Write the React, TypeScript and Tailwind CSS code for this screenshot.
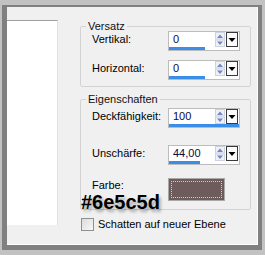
import React from "react";

function Spin() {
  return (
    <svg width="10" height="15" viewBox="0 0 10 15" className="block shrink-0">
      <rect x="0.5" y="0.5" width="9" height="6.5" fill="#eef1f6" stroke="#cdd3de" />
      <rect x="0.5" y="8" width="9" height="6.5" fill="#eef1f6" stroke="#cdd3de" />
      <path d="M2 6 L5 2.5 L8 6Z" fill="#7585c8" />
      <path d="M2 9.5 L5 13 L8 9.5Z" fill="#7585c8" />
    </svg>
  );
}

function Drop() {
  return (
    <svg width="12" height="15" viewBox="0 0 12 15" className="block shrink-0 ml-[1px] mr-[1px]">
      <rect x="0.5" y="0.5" width="11" height="14" fill="#fbfbfb" stroke="#3a3a3a" />
      <path d="M2.5 6 H9.5 L6 10Z" fill="#000" />
    </svg>
  );
}

function Control({ value, bar }: { value: string; bar: number }) {
  return (
    <div className="w-[72px] h-[20px] border border-[#bcbcbc] bg-white flex flex-col">
      <div className="flex h-[15px]">
        <div className="flex-1 pl-[4px] text-[11px] leading-[15px] text-[#0a0a3a]">{value}</div>
        <Spin />
        <Drop />
      </div>
      <div className="h-[3px]">
        <div className="h-full bg-[#3b8ee8]" style={{ width: bar }} />
      </div>
    </div>
  );
}

function Row({ label, value, bar }: { label: string; value: string; bar: number }) {
  return (
    <div className="flex items-start">
      <div className="w-[76px] mt-[1px] text-[11px] leading-[15px] text-black">{label}</div>
      <Control value={value} bar={bar} />
    </div>
  );
}

export default function App() {
  return (
    <div className="w-[265px] h-[255px] bg-[#c2c2c2] pl-[2px] pt-[5px] pr-[3px] pb-[5px] font-['Liberation_Sans',Arial,sans-serif]">
      <div className="h-full border-l-[5px] border-t-[2px] border-r-[4px] border-b-[5px] border-[#808080]">
        <div className="relative h-full bg-[#f0f0f0] border-r border-b border-white flex items-start">
          <div className="mt-[13px] w-[51px] h-[205px] bg-white border-t border-[#a0a0a0] border-r border-r-[#e2e2e2]" />
          <div className="ml-[22px] mt-[12px] w-[171px] flex flex-col">
            <fieldset className="border border-[#d3d3d3] rounded-[2px] p-0 m-0 min-w-0">
              <legend className="ml-[5px] px-[2px] text-[11px] leading-[15px] text-[#111]">Versatz</legend>
              <div className="-mt-[3px] pl-[11px] pb-[6px] flex flex-col gap-[9px]">
                <Row label="Vertikal:" value="0" bar={36} />
                <Row label="Horizontal:" value="0" bar={36} />
              </div>
            </fieldset>
            <fieldset className="mt-[5px] border border-[#d3d3d3] rounded-[2px] p-0 m-0 min-w-0">
              <legend className="ml-[5px] px-[2px] text-[11px] leading-[15px] text-[#111]">Eigenschaften</legend>
              <div className="mt-[1px] pl-[11px] pb-[8px] flex flex-col">
                <Row label="Deckfähigkeit:" value="100" bar={70} />
                <div className="mt-[17px]">
                  <Row label="Unschärfe:" value="44,00" bar={31} />
                </div>
                <div className="mt-[13px] flex items-start">
                  <div className="w-[76px] text-[11px] leading-[15px] text-black">Farbe:</div>
                  <div className="w-[57px] h-[23px] border border-[#a8a8a8] bg-[#6e5c5d] p-[2px]">
                    <div className="h-full border border-dotted border-[#d6cccc]" />
                  </div>
                </div>
              </div>
            </fieldset>
            <div className="mt-[8px] pl-[1px] flex items-center gap-[4px]">
              <div className="w-[13px] h-[13px] border border-[#8e8f8f] bg-gradient-to-br from-[#dcdcdc] to-[#f8f8f8]" />
              <span className="text-[11px] leading-[13px] text-black">Schatten auf neuer Ebene</span>
            </div>
          </div>
          <div className="absolute left-[74px] top-[185px] text-[20px] leading-[20px] font-bold text-black [text-shadow:2px_3px_3px_rgba(0,0,0,0.3)]">
            #6e5c5d
          </div>
        </div>
      </div>
    </div>
  );
}
